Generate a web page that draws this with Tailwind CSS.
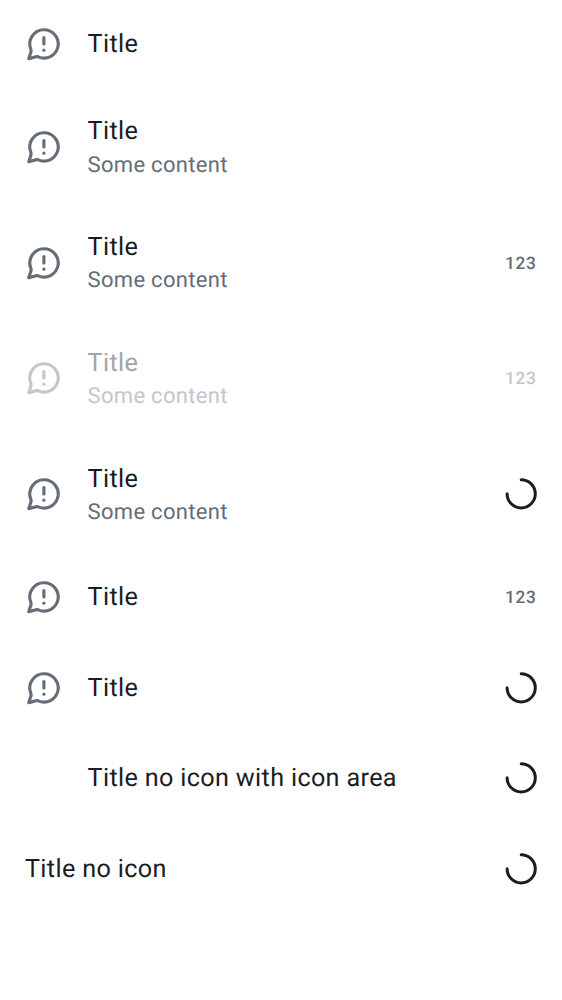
<!DOCTYPE html>
<html lang="en">
<head>
<meta charset="utf-8">
<title>List items</title>
<script src="https://cdn.jsdelivr.net/npm/@tailwindcss/browser@4"></script>
</head>
<body class="bg-white">
<svg class="hidden">
  <symbol id="chat" viewBox="0 0 24 24">
    <path d="M12 3a9 9 0 1 1-3.6 17.2Q7.8 19.95 7.1 20.1L2.4 21.35 3.8 17Q4 16.2 3.75 15.5A9 9 0 0 1 12 3Z" fill="none" stroke="currentColor" stroke-width="2" stroke-linejoin="round"/>
    <path d="M12 8v4" fill="none" stroke="currentColor" stroke-width="2" stroke-linecap="round"/>
    <circle cx="12" cy="16" r="1" fill="currentColor"/>
  </symbol>
  <symbol id="spinner" viewBox="0 0 32 32">
    <path d="M16.2 1.7A14.1 14.1 0 1 1 2.1 15.8" fill="none" stroke="currentColor" stroke-width="3" stroke-linecap="round"/>
  </symbol>
</svg>
<main class="-mt-[1.5px] h-[1001px] overflow-hidden font-['Roboto',sans-serif] text-[#1b1d22] antialiased [text-rendering:geometricPrecision]">
  <div class="flex h-[90.5px] items-center pl-[24.6px] pr-[24.7px]">
    <svg class="mr-[25.2px] size-[37.8px] shrink-0 text-[#656d77]"><use href="#chat"/></svg>
    <div class="grow pt-[2.6px] text-[25.2px] leading-[37.8px] tracking-[0.34px]">Title</div>
  </div>
  <div class="flex h-[115.7px] items-center pl-[24.6px] pr-[24.7px]">
    <svg class="mr-[25.2px] size-[37.8px] shrink-0 text-[#656d77]"><use href="#chat"/></svg>
    <div class="grow pb-[0.8px]"><div class="text-[25.2px] leading-[37.8px] tracking-[0.34px]">Title</div><div class="pt-[0.5px] text-[22px] leading-[28px] tracking-[0.3px] text-[#656d77]">Some content</div></div>
  </div>
  <div class="flex h-[115.7px] items-center pl-[24.6px] pr-[24.7px]">
    <svg class="mr-[25.2px] size-[37.8px] shrink-0 text-[#656d77]"><use href="#chat"/></svg>
    <div class="grow pb-[0.8px]"><div class="text-[25.2px] leading-[37.8px] tracking-[0.34px]">Title</div><div class="text-[22px] leading-[28px] tracking-[0.3px] text-[#656d77]">Some content</div></div>
    <div class="pr-[0.6px] pt-[5px] text-[17.3px] font-medium tracking-[0.79px] text-[#656d77]">123</div>
  </div>
  <div class="flex h-[115.7px] items-center pl-[24.6px] pr-[24.7px] text-[#c3c6cb]">
    <svg class="mr-[25.2px] size-[37.8px] shrink-0"><use href="#chat"/></svg>
    <div class="grow pb-[0.8px]"><div class="text-[25.2px] leading-[37.8px] tracking-[0.34px] text-[#a4a4a5]">Title</div><div class="text-[22px] leading-[28px] tracking-[0.3px]">Some content</div></div>
    <div class="pr-[0.6px] pt-[3.6px] text-[17.3px] font-medium tracking-[0.79px]">123</div>
  </div>
  <div class="flex h-[115.7px] items-center pl-[24.6px] pr-[24.7px]">
    <svg class="mr-[25.2px] size-[37.8px] shrink-0 text-[#656d77]"><use href="#chat"/></svg>
    <div class="grow pb-[0.6px]"><div class="text-[25.2px] leading-[37.8px] tracking-[0.34px]">Title</div><div class="text-[22px] leading-[28px] tracking-[0.3px] text-[#656d77]">Some content</div></div>
    <svg class="size-8 shrink-0"><use href="#spinner"/></svg>
  </div>
  <div class="flex h-[90.5px] items-center pl-[24.6px] pr-[24.7px]">
    <svg class="mr-[25.2px] size-[37.8px] shrink-0 text-[#656d77]"><use href="#chat"/></svg>
    <div class="grow pt-[1.6px] text-[25.2px] leading-[37.8px] tracking-[0.34px]">Title</div>
    <div class="pr-[0.6px] pt-[3.6px] text-[17.3px] font-medium tracking-[0.79px] text-[#656d77]">123</div>
  </div>
  <div class="flex h-[90.5px] items-center pl-[24.6px] pr-[24.7px]">
    <svg class="mr-[25.2px] size-[37.8px] shrink-0 text-[#656d77]"><use href="#chat"/></svg>
    <div class="grow pt-[2.6px] text-[25.2px] leading-[37.8px] tracking-[0.34px]">Title</div>
    <svg class="size-8 shrink-0"><use href="#spinner"/></svg>
  </div>
  <div class="flex h-[90.5px] items-center pl-[24.6px] pr-[24.7px]">
    <div class="mr-[25.2px] size-[37.8px] shrink-0"></div>
    <div class="grow pt-[2.4px] text-[25.2px] leading-[37.8px] tracking-[0.34px]">Title no icon with icon area</div>
    <svg class="size-8 shrink-0"><use href="#spinner"/></svg>
  </div>
  <div class="flex h-[90.5px] items-center pl-[25px] pr-[24.7px]">
    <div class="grow pt-[2.6px] text-[25.2px] leading-[37.8px] tracking-[0.34px]">Title no icon</div>
    <svg class="size-8 shrink-0"><use href="#spinner"/></svg>
  </div>
</main>
</body>
</html>
